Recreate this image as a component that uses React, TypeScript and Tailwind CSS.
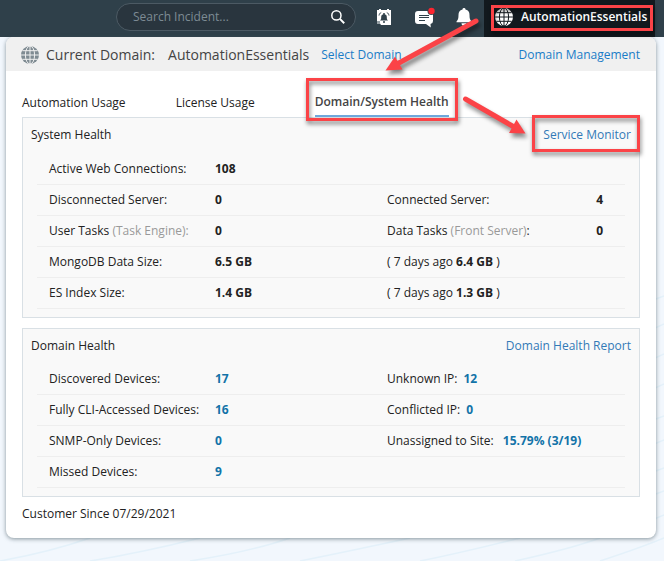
import React from "react";

const GlobeIcon = ({ className }: { className?: string }) => (
  <svg viewBox="0 0 18 18" className={className} aria-hidden="true">
    <circle cx="9" cy="9" r="9" fill="currentColor" />
    <g fill="none" className="stroke-(--gap)" strokeWidth="1">
      <path d="M9 0v18M0 9h18M1.5 4.7h15M1.5 13.3h15" />
      <ellipse cx="9" cy="9" rx="4.6" ry="9" />
    </g>
  </svg>
);

const SearchIcon = () => (
  <svg viewBox="0 0 14 14" className="h-[14px] w-[14px]" fill="none" stroke="white" aria-hidden="true">
    <circle cx="5.4" cy="5.4" r="4.6" strokeWidth="1.5" />
    <path d="M8.9 8.9l4.3 4.3" strokeWidth="2" />
  </svg>
);

const AlarmIcon = () => (
  <svg viewBox="0 0 16 18" className="h-[18px] w-4" aria-hidden="true">
    <path d="M1 2h2V1h2v1h6V1h2v1h2v15H5l-1-1.500H1z" fill="white" />
    <path d="M4 12.500c1.200-1 1.200-2 1.200-3.500a2.800 2.800 0 0 1 5.600 0c0 1.500 0 2.500 1.200 3.500z" fill="#2f404a" />
    <path d="M8 5v2M7 14h2" stroke="#2f404a" strokeWidth="1.500" />
    <path d="M3 7.500c.3-1.500 1-2.500 2.200-3M13 7.500c-.3-1.500-1-2.500-2.200-3M1 14h3" fill="none" stroke="#2f404a" strokeWidth="1" />
  </svg>
);

const ChatIcon = () => (
  <svg viewBox="0 0 22 22" className="h-[22px] w-[22px]" aria-hidden="true">
    <path d="M5 5h12a3 3 0 0 1 3 3v7a3 3 0 0 1-2.500 3l.3 3.500L13 18H5a3 3 0 0 1-3-3V8a3 3 0 0 1 3-3z" fill="white" />
    <path d="M6 9.500h10M6 11.500h10M6 14.500h6" stroke="#2f404a" strokeWidth="1" />
    <circle cx="18.500" cy="5" r="4" fill="#2f404a" />
    <circle cx="18.500" cy="5" r="3.200" fill="#fb2530" />
  </svg>
);

const BellIcon = () => (
  <svg viewBox="0 0 16 18" className="h-[18px] w-4" fill="white" aria-hidden="true">
    <path d="M8 0a1.500 1.500 0 0 1 1.500 1.600C12.500 2.300 13.500 4.500 13.500 7c0 3.500.5 5 2 6.500v.8H.5v-.8C2 12 2.500 10.500 2.500 7c0-2.500 1-4.700 4-5.400A1.500 1.500 0 0 1 8 0z" />
    <path d="M5.500 15.300h5a2.500 2.500 0 0 1-5 0z" />
  </svg>
);

const Highlight = ({ className }: { className: string }) => (
  <span
    aria-hidden="true"
    className={`pointer-events-none absolute z-10 border-3 border-[#fb4347] drop-shadow-[1px_3px_2px_rgba(0,0,0,0.5)] ${className}`}
  />
);

const Arrows = () => (
  <svg
    className="pointer-events-none absolute top-0 left-0 z-20 h-[160px] w-[560px] drop-shadow-[2px_4px_2px_rgba(0,0,0,0.45)]"
    viewBox="0 0 560 160"
    fill="#fb4347"
    stroke="#fb4347"
    aria-hidden="true"
  >
    <path d="M476 21L397 64" strokeWidth="5" strokeLinecap="round" />
    <path d="M385.500 70.500l9.500-14 7.500 13z" stroke="none" />
    <path d="M465.500 99L515 127.500" strokeWidth="5" strokeLinecap="round" />
    <path d="M525.500 133.500l-16.500-.5 7.500-13.500z" stroke="none" />
  </svg>
);

const Backdrop = () => (
  <svg
    className="absolute inset-0 -z-10 h-full w-full"
    viewBox="0 0 664 561"
    preserveAspectRatio="none"
    fill="none"
    stroke="#e4f1fa"
    strokeWidth="1.500"
    aria-hidden="true"
  >
    <path d="M0 561Q50 552 90 538M90 561Q140 553 200 538M190 561Q250 552 290 538M300 561Q350 551 410 538M420 561Q460 553 520 538M515 561Q570 549 600 538M600 561Q640 548 664 538" />
    <path d="M640 525L664 515M640 500L664 491M640 477L664 468M640 450L664 440M640 425L664 416M640 395L664 384M640 365L664 354M640 335L664 324M640 305L664 296" />
  </svg>
);

interface PanelProps {
  title: string;
  action: string;
  highlighted?: boolean;
  children: React.ReactNode;
}

const Panel = ({ title, action, highlighted, children }: PanelProps) => (
  <section className="border border-[#d9e0e5] bg-[#f9f9f9] pb-2">
    <div className={`flex items-center justify-between px-2 pb-[2px] ${highlighted ? "h-9" : "h-[35px]"}`}>
      <h2>{title}</h2>
      <a href="#" className="relative text-[#337ab7]">
        {action}
        {highlighted && <Highlight className="-top-[11px] -right-[9px] -bottom-2 -left-[11px]" />}
      </a>
    </div>
    <div className="px-[14px]">
      <table className="w-full table-fixed border-separate border-spacing-0">
        <colgroup>
          <col className="w-[178px]" />
          <col className="w-[172px]" />
          <col />
          <col className="w-12" />
        </colgroup>
        <tbody>{children}</tbody>
      </table>
    </div>
  </section>
);

const rowClass = "h-[31px] *:border-b *:border-[#eeeeee]";
const labelClass = "pl-3 text-left font-normal whitespace-nowrap";

const systemRows = [
  { label: "Active Web Connections:", value: "108" },
  { label: "Disconnected Server:", value: "0", other: "Connected Server:", otherValue: "4" },
  { label: "User Tasks", note: "(Task Engine):", value: "0", other: "Data Tasks", otherNote: "(Front Server)", otherValue: "0" },
  { label: "MongoDB Data Size:", value: "6.5 GB", previous: "6.4 GB" },
  { label: "ES Index Size:", value: "1.4 GB", previous: "1.3 GB" },
];

const domainRows = [
  { label: "Discovered Devices:", value: "17", other: "Unknown IP:", otherValue: "12" },
  { label: "Fully CLI-Accessed Devices:", value: "16", other: "Conflicted IP:", otherValue: "0" },
  { label: "SNMP-Only Devices:", value: "0", other: "Unassigned to Site: ", otherValue: "15.79% (3/19)" },
  { label: "Missed Devices:", value: "9" },
];

const App = () => {
  return (
    <div className="relative isolate min-h-screen bg-[#f2f7fd] font-['Open_Sans',sans-serif] text-[12px] leading-[18px] text-[#222222]">
      <Backdrop />
      <header className="flex h-[37px] items-center bg-[#2f404a] pr-[9px] pl-[116px]">
        <div className="-mt-1 flex h-7 w-60 items-center rounded-full border border-[#4c5a64] bg-[#29353e] pr-[10px] pl-4">
          <input
            type="text"
            aria-label="Search Incident"
            placeholder="Search Incident..."
            className="min-w-0 flex-1 bg-transparent text-white outline-none placeholder:text-[#7d8b94]"
          />
          <button aria-label="Search">
            <SearchIcon />
          </button>
        </div>
        <div className="-mt-1 ml-5 flex flex-1 items-center justify-between pr-3">
          <button aria-label="Alarms"><AlarmIcon /></button>
          <button aria-label="Messages"><ChatIcon /></button>
          <button aria-label="Notifications"><BellIcon /></button>
        </div>
        <button className="relative flex h-full w-[171px] items-center gap-2 bg-[#12191e] pb-1 pl-[11px] font-semibold whitespace-nowrap text-white">
          <GlobeIcon className="h-[18px] w-[18px] shrink-0 [--gap:#12191e]" />
          AutomationEssentials
          <Highlight className="top-[5px] right-[2px] bottom-[6px] left-[7px]" />
        </button>
      </header>

      <main className="mx-[6px] mr-2 overflow-hidden rounded-lg bg-white pb-[15px] shadow-[0_1px_4px_rgba(60,80,90,0.6)]">
        <div className="flex h-[34px] items-center bg-[#f0f0f0] pt-[2px] pr-4 pl-[15px]">
          <GlobeIcon className="mr-[7px] h-[18px] w-[18px] text-[#7f8b92] [--gap:#f0f0f0]" />
          <span className="mr-[13px] text-[14px] text-[#444444]">Current Domain:</span>
          <span className="mr-3 text-[14px] text-[#444444]">AutomationEssentials</span>
          <a href="#" className="text-[#1a7cc7]">Select Domain</a>
          <a href="#" className="ml-auto text-[#1a7cc7]">Domain Management</a>
        </div>

        <nav className="flex px-4 pt-[22px]">
          <button className="mr-[50px] h-6 pb-1">Automation Usage</button>
          <button className="mr-[60px] h-6 pb-1">License Usage</button>
          <button className="relative h-6 border-b-2 border-[#6fa8dc] pb-1 font-semibold text-[#444444]">
            Domain/System Health
            <Highlight className="-inset-x-[9px] -top-[15px] -bottom-[6px]" />
          </button>
        </nav>

        <div className="flex flex-col gap-[10px] px-4">
          <Panel title="System Health" action="Service Monitor" highlighted>
            {systemRows.map((row) => (
              <tr key={row.label} className={rowClass}>
                <th className={labelClass}>
                  {row.label} {row.note && <span className="text-[#999999]">{row.note}</span>}
                </th>
                <td className="font-bold">{row.value}</td>
                {row.previous ? (
                  <td colSpan={2}>
                    ( 7 days ago <b>{row.previous}</b> )
                  </td>
                ) : (
                  <>
                    <td className="whitespace-nowrap">
                      {row.other} {row.otherNote && <><span className="text-[#999999]">{row.otherNote}</span>:</>}
                    </td>
                    <td className="pr-[22px] text-right font-bold">{row.otherValue}</td>
                  </>
                )}
              </tr>
            ))}
          </Panel>

          <Panel title="Domain Health" action="Domain Health Report">
            {domainRows.map((row) => (
              <tr key={row.label} className={rowClass}>
                <th className={labelClass}>{row.label}</th>
                <td className="font-bold text-[#1273a8]">{row.value}</td>
                <td colSpan={2}>
                  {row.other}
                  <b className="ml-[6px] text-[#1273a8]">{row.otherValue}</b>
                </td>
              </tr>
            ))}
          </Panel>
        </div>

        <p className="px-4 pt-2">Customer Since 07/29/2021</p>
      </main>
      <Arrows />
    </div>
  );
};

export default App;
